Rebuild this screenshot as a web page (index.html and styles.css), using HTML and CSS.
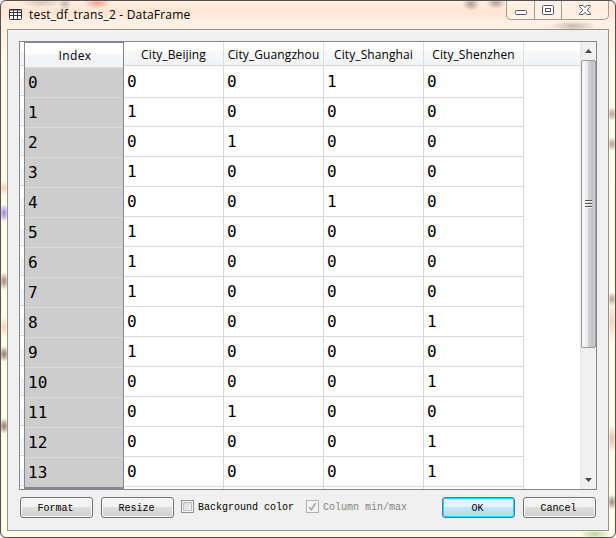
FILE: index.html
```
<!DOCTYPE html>
<html lang="en">
<head>
<meta charset="utf-8">
<title>test_df_trans_2 - DataFrame</title>
<link rel="stylesheet" href="styles.css">
</head>
<body>
<div class="window">
  <header class="titlebar">
    <svg class="app-icon" width="13" height="11" viewBox="0 0 13 11"><rect x=".5" y=".5" width="12" height="10" rx="1" fill="#fff" stroke="#333"/><path d="M0 1h13M0 3.5h13M0 6.5h13M4.5 1v10M8.5 1v10" stroke="#333" fill="none"/></svg>
    <h1 class="title">test_df_trans_2 - DataFrame</h1>
    <div class="controls">
      <span class="control"><svg width="12" height="5" viewBox="0 0 12 5"><rect x=".5" y=".5" width="11" height="4" rx="1" fill="#fff" stroke="#53566b"/></svg></span>
      <span class="control"><svg width="12" height="10" viewBox="0 0 12 10"><rect x=".5" y=".5" width="11" height="9" rx="1" fill="#fff" stroke="#53566b"/><rect x="3.5" y="3.5" width="5" height="3" fill="#fff" stroke="#53566b"/></svg></span>
      <span class="control close"><svg width="12" height="10" viewBox="0 0 12 10"><path d="M.6.5h3.5L6 2.6 7.9.5h3.5v1L8.2 5l3.2 3.5v1H7.9L6 7.4 4.1 9.5H.6v-1L3.8 5 .6 1.5z" fill="#fff" stroke="#53566b"/></svg></span>
    </div>
  </header>
  <main class="client">
    <section class="frame">
      <div class="strip"><i class="corner"></i><i></i><i></i><i></i><i></i><i></i><i></i><i></i><i></i><i></i><i></i><i></i><i></i><i></i><i></i><i></i></div>
      <div class="index">
        <div class="index-head">Index</div>
        <div>0</div><div>1</div><div>2</div><div>3</div><div>4</div><div>5</div><div>6</div><div>7</div><div>8</div><div>9</div><div>10</div><div>11</div><div>12</div><div>13</div><div></div>
      </div>
      <div class="data">
        <div class="head"><span>City_Beijing</span><span>City_Guangzhou</span><span>City_Shanghai</span><span>City_Shenzhen</span></div>
        <div class="row"><b>0</b><b>0</b><b>1</b><b>0</b></div>
        <div class="row"><b>1</b><b>0</b><b>0</b><b>0</b></div>
        <div class="row"><b>0</b><b>1</b><b>0</b><b>0</b></div>
        <div class="row"><b>1</b><b>0</b><b>0</b><b>0</b></div>
        <div class="row"><b>0</b><b>0</b><b>1</b><b>0</b></div>
        <div class="row"><b>1</b><b>0</b><b>0</b><b>0</b></div>
        <div class="row"><b>1</b><b>0</b><b>0</b><b>0</b></div>
        <div class="row"><b>1</b><b>0</b><b>0</b><b>0</b></div>
        <div class="row"><b>0</b><b>0</b><b>0</b><b>1</b></div>
        <div class="row"><b>1</b><b>0</b><b>0</b><b>0</b></div>
        <div class="row"><b>0</b><b>0</b><b>0</b><b>1</b></div>
        <div class="row"><b>0</b><b>1</b><b>0</b><b>0</b></div>
        <div class="row"><b>0</b><b>0</b><b>0</b><b>1</b></div>
        <div class="row"><b>0</b><b>0</b><b>0</b><b>1</b></div>
        <div class="row"><b></b><b></b><b></b><b></b></div>
      </div>
      <div class="scrollbar">
        <svg class="arrow" width="7" height="4" viewBox="0 0 7 4"><path d="M0 4 3.5 0 7 4z" fill="#444"/></svg>
        <div class="thumb"><svg width="7" height="8" viewBox="0 0 7 8"><path d="M0 .5h7M0 3.5h7M0 6.5h7" stroke="#555"/><path d="M0 1.5h7M0 4.5h7M0 7.5h7" stroke="#f4f4f4"/></svg></div>
        <svg class="arrow down" width="7" height="4" viewBox="0 0 7 4"><path d="M0 0 3.5 4 7 0z" fill="#444"/></svg>
      </div>
    </section>
    <footer class="actions">
      <button>Format</button>
      <button>Resize</button>
      <label class="check"><span class="box"></span>Background color</label>
      <label class="check disabled"><span class="box"><svg width="9" height="9" viewBox="0 0 9 9"><path d="M1 5 3.2 7.7 7.7 1" fill="none" stroke="#aaa" stroke-width="1.8"/></svg></span>Column min/max</label>
      <button class="primary">OK</button>
      <button>Cancel</button>
    </footer>
  </main>
</div>
</body>
</html>
```
FILE: styles.css
```
* { box-sizing: border-box; }
html { background: #f4efe6; }
body { margin: 0; overflow: hidden; }
.window {
  width: 616px; height: 538px; padding: 0 6px;
  border: 1px solid #55504e; border-radius: 6px;
  background:
    radial-gradient(ellipse 7px 6px at 64px 3px, #a9938b99, transparent),
    radial-gradient(ellipse 14px 6px at 96px 2px, #f8a08e, transparent),
    radial-gradient(ellipse 22px 5px at 40px 2px, #b8a49a88, transparent),
    radial-gradient(ellipse 9px 7px at 470px 3px, #8b776faa, transparent),
    radial-gradient(ellipse 10px 6px at 495px 2px, #8b776faa, transparent),
    radial-gradient(ellipse 24px 5px at 572px 25px, #a79c90aa, transparent),
    radial-gradient(ellipse 5px 9px at 3px 212px, #9a80e0, transparent),
    radial-gradient(ellipse 5px 8px at 3px 187px, #f4cdbb, transparent),
    radial-gradient(ellipse 5px 9px at 3px 280px, #9c8578, transparent),
    radial-gradient(ellipse 5px 10px at 3px 326px, #f6cfbd, transparent),
    radial-gradient(ellipse 5px 8px at 3px 353px, #8a7468, transparent),
    radial-gradient(ellipse 5px 8px at 3px 425px, #8a7468, transparent),
    radial-gradient(ellipse 5px 7px at 611px 113px, #b79c8d, transparent),
    radial-gradient(ellipse 5px 7px at 611px 143px, #b79c8d, transparent),
    radial-gradient(ellipse 5px 7px at 611px 298px, #b79c8d, transparent),
    radial-gradient(ellipse 5px 22px at 611px 320px, #f4d0bc, transparent),
    radial-gradient(ellipse 5px 14px at 611px 438px, #e8bda9, transparent),
    radial-gradient(ellipse 5px 8px at 611px 501px, #9b8377, transparent),
    radial-gradient(ellipse 16px 5px at 594px 533px, #b8d698, transparent),
    linear-gradient(#fff0e2 0, #ffe4d3 12px, #fff0e5 20px, #fff0e3 30px, #fffbea 60px, #fffde9);
}
.titlebar { height: 28px; display: flex; align-items: flex-start; padding: 0 0 0 2px; }
.app-icon { margin-top: 8px; }
.title {
  margin: 4px 0 0 7px; font: 12px/20px "Open Sans", sans-serif;
  letter-spacing: .2px; color: #000; white-space: nowrap;
}
.controls {
  display: flex; margin-left: auto; height: 19px; width: 103px;
  border: 1px solid #a49a94; border-top: 0; border-radius: 0 0 5px 5px;
  background: #fff3eb99;
}
.control { width: 27px; display: flex; justify-content: center; align-items: center; border-right: 1px solid #a49a94; }
.control:first-child { width: 28px; padding-top: 4px; }
.control.close { flex: 1; border: 0; }
.client {
  width: 602px; height: 502px; padding: 11px;
  border: 1px solid #96948e; background: #f0f0f0;
}
.frame {
  display: flex; width: 578px; height: 449px; overflow: hidden;
  border: 1px solid #828790; background: #fff;
}
.strip { width: 4px; flex: none; }
.strip i { display: block; height: 30px; border-bottom: 1px solid #d5d7da; background: linear-gradient(#fff 45%, #f3f4f6 45%); }
.strip .corner { height: 24px; }
.index {
  width: 100px; height: 447px; flex: none; overflow: hidden;
  border: 1px solid #828790; border-bottom-width: 2px; background: #cdcdcd;
}
.index div { height: 30px; padding-left: 3px; border-bottom: 1px solid #d9d9d9; font: 16px/30px "DejaVu Sans Mono", monospace; }
.index .index-head {
  height: 25px; padding: 0 0 0 2px; border-bottom: 1px solid #dcdcdc; text-align: center;
  font: 12px/25px "Open Sans", sans-serif; letter-spacing: .35px;
  background: linear-gradient(#fff 45%, #f3f5f7 45%, #f0f2f4);
}
.data { flex: 1; overflow: hidden; }
.head {
  display: grid; grid-template-columns: repeat(4, 100px); height: 24px;
  border-bottom: 1px solid #d5d5d5; background: linear-gradient(#fff 40%, #f7f8fa 40%, #f1f3f5);
}
.head span { border-right: 1px solid #dedfe1; text-align: center; letter-spacing: .1px; font: 12px/26px "Open Sans", sans-serif; white-space: nowrap; }
.row { display: grid; grid-template-columns: repeat(4, 100px); height: 30px; }
.row b {
  padding-left: 3px; border: solid #d8d8d8; border-width: 0 1px 1px 0;
  font: 16px/29px "DejaVu Sans Mono", monospace;
}
.head + .row { height: 31px; }
.head + .row b { line-height: 31px; }
.scrollbar {
  display: flex; flex-direction: column; align-items: center; flex: none; width: 16px;
  background: linear-gradient(90deg, #e6e6e6, #f0f0f0 20%, #f0f0f0);
}
.arrow { flex: none; margin: 7px 0; }
.thumb {
  display: flex; align-items: center; justify-content: center;
  width: 15px; height: 288px; flex: none; border: 1px solid #979797; border-radius: 2px;
  background: linear-gradient(90deg, #f5f5f5 0 20%, #e8e8ea 45%, #d2d2d6 48%, #bfc0c5 88%, #e0e0e2);
}
.down { margin: auto 0 7px; }
.actions { display: flex; align-items: flex-start; padding: 7px 1px 0; font: 10px/13px "Liberation Mono", monospace; }
button {
  width: 73px; height: 21px; margin: 0 8px 0 0; padding: 1px 2px 0 0; flex: none;
  border: 1px solid #707070; border-radius: 3px; box-shadow: inset 0 0 0 1px #fafafa;
  background: linear-gradient(#f2f2f2 50%, #dedede 50%, #cfcfcf);
  font: 10px/13px "Liberation Mono", monospace; color: #000;
}
.primary {
  margin-left: auto; border-color: #3c7fb1; box-shadow: inset 0 0 0 1px #31d0f7;
  background: linear-gradient(#e4f4fc 50%, #c4e5f6 50%, #b0dcf4);
}
button:last-child { margin-right: 0; }
.check { display: flex; align-items: center; gap: 4px; height: 20px; margin: 0 13px 0 -1px; white-space: nowrap; }
.box { width: 13px; height: 13px; margin-top: -1px; border: 1px solid #8e8f8f; box-shadow: inset 0 0 0 1px #f4f4f4, inset 0 0 0 2px #b9bfc6; background: linear-gradient(135deg, #cfd3d9, #f8f8f8); }
.disabled { color: #838383; }
.disabled .box { display: flex; align-items: center; justify-content: center; border-color: #b1b1b1; box-shadow: none; background: #f5f5f5; }
```
